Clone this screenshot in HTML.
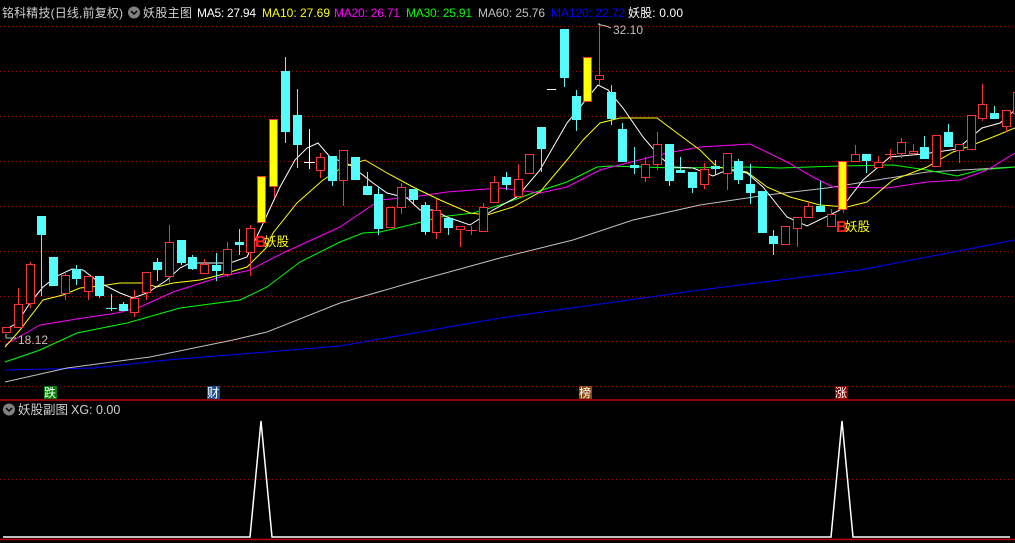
<!DOCTYPE html>
<html><head><meta charset="utf-8"><style>
html,body{margin:0;padding:0;background:#000;width:1015px;height:543px;overflow:hidden}
svg{display:block}
text{font-family:"Liberation Sans","Noto Sans CJK SC",sans-serif}
</style></head><body>
<svg width="1015" height="543" viewBox="0 0 1015 543" xmlns="http://www.w3.org/2000/svg">
<rect width="1015" height="543" fill="#000"/>
<g stroke="#a00000" stroke-width="1" stroke-dasharray="1,3">
<line x1="0" y1="26.5" x2="1015" y2="26.5"/><line x1="0" y1="71.5" x2="1015" y2="71.5"/>
<line x1="0" y1="116.5" x2="1015" y2="116.5"/><line x1="0" y1="161.5" x2="1015" y2="161.5"/>
<line x1="0" y1="206.5" x2="1015" y2="206.5"/><line x1="0" y1="251.5" x2="1015" y2="251.5"/>
<line x1="0" y1="296.5" x2="1015" y2="296.5"/><line x1="0" y1="341.5" x2="1015" y2="341.5"/>
<line x1="0" y1="386.5" x2="1015" y2="386.5"/><line x1="0" y1="479.5" x2="1015" y2="479.5"/>
</g>
<line x1="0" y1="400" x2="1015" y2="400" stroke="#c00000" stroke-width="1.5"/>
<line x1="0" y1="539.5" x2="1015" y2="539.5" stroke="#c00000" stroke-width="1.5"/>

<!-- header -->
<g font-size="12">
<text x="2" y="17" fill="#d0d0d0" textLength="121">铭科精技(日线,前复权)</text>
<circle cx="134" cy="12.5" r="6" fill="#808080"/><path d="M131 11 L134 14 L137 11" stroke="#000" stroke-width="1.5" fill="none"/>
<text x="143" y="17" fill="#d0d0d0" textLength="49">妖股主图</text>
<text x="197" y="17" fill="#fff" textLength="59">MA5: 27.94</text>
<text x="262" y="17" fill="#ffff00" textLength="68">MA10: 27.69</text>
<text x="334" y="17" fill="#ff00ff" textLength="66">MA20: 26.71</text>
<text x="406" y="17" fill="#00ff00" textLength="66">MA30: 25.91</text>
<text x="478" y="17" fill="#c0c0c0" textLength="67">MA60: 25.76</text>
<text x="551" y="17" fill="#0000ff" textLength="74">MA120: 22.72</text>
<text x="628" y="17" fill="#fff" textLength="55">妖股: 0.00</text>
</g>

<!-- MA lines -->
<g fill="none" stroke-width="1">
<polyline stroke="#0000ff" points="5,370 93,368 167,360 340,346 500,318 700,290 860,270 1015,240"/>
<polyline stroke="#c0c0c0" points="5,382 67,368 150,357 233,340 267,332 340,303 420,280 500,258 573,240 633,220 700,205 767,195 827,188 927,172 1015,167"/>
<polyline stroke="#00ff00" points="5,362 40,350 77,333 127,323 180,308 240,300 267,287 300,262 340,242 363,233 380,232 410,225 440,217 473,213 500,205 533,193 567,182 597,167 610,166 673,168 753,167 780,168 840,166 893,165 927,170 957,176 980,170 1015,167"/>
<polyline stroke="#ff00ff" points="5,345 40,325 83,318 117,313 140,307 173,292 220,277 250,270 283,253 340,227 380,200 413,197 447,192 500,188 540,193 567,187 600,170 627,163 667,153 700,147 750,144 787,162 813,177 833,187 887,188 927,182 960,180 987,170 1015,153"/>
<polyline stroke="#ffff00" points="5,347 20,330 43,300 63,295 80,288 100,286 120,283 143,283 157,287 173,283 200,280 220,275 247,267 267,247 273,233 297,203 323,180 343,167 365,160 387,173 413,187 440,200 470,213 487,215 513,207 540,192 567,160 583,140 600,123 620,118 657,118 677,133 700,150 717,167 747,172 767,187 790,197 820,205 847,207 867,202 893,180 927,167 953,152 967,147 993,137 1015,128"/>
<polyline stroke="#ffffff" points="5,330 17,323 30,303 43,287 57,276 72,269 83,270 100,283 120,293 133,298 147,293 167,280 180,268 190,263 230,263 247,257 260,230 280,187 295,160 307,148 318,143 330,157 350,165 373,183 387,193 407,198 420,210 433,210 447,217 470,225 493,210 517,197 540,170 567,123 598,85 608,90 623,108 643,137 660,157 673,167 693,168 713,176 727,170 747,173 763,187 787,217 807,226 840,210 863,180 890,157 923,154 957,149 982,128 1000,123 1015,110"/>
</g>

<!-- wicks -->
<g stroke-width="1">
<g stroke="#ff3232">
<line x1="18.5" y1="288" x2="18.5" y2="304"/><line x1="30.5" y1="262" x2="30.5" y2="308"/>
<line x1="65.5" y1="272" x2="65.5" y2="300"/><line x1="88.5" y1="291" x2="88.5" y2="300"/>
<line x1="134.5" y1="290" x2="134.5" y2="317"/><line x1="146.5" y1="292" x2="146.5" y2="300"/>
<line x1="169.5" y1="225" x2="169.5" y2="283"/><line x1="204.5" y1="259" x2="204.5" y2="264"/>
<line x1="227.5" y1="242" x2="227.5" y2="277"/><line x1="250.5" y1="225" x2="250.5" y2="276"/>
<line x1="274.5" y1="186" x2="274.5" y2="198"/>
<line x1="320.5" y1="153" x2="320.5" y2="178"/><line x1="343.5" y1="180" x2="343.5" y2="206"/>
<line x1="401.5" y1="183" x2="401.5" y2="214"/><line x1="436.5" y1="199" x2="436.5" y2="239"/>
<line x1="460.5" y1="229" x2="460.5" y2="247"/><line x1="471.5" y1="226" x2="471.5" y2="235"/><line x1="466" y1="230.5" x2="477" y2="230.5"/>
<line x1="483.5" y1="203" x2="483.5" y2="207"/><line x1="494.5" y1="176" x2="494.5" y2="182"/>
<line x1="518.5" y1="164" x2="518.5" y2="179"/><line x1="599.5" y1="23" x2="599.5" y2="85"/>
<line x1="645.5" y1="157" x2="645.5" y2="182"/><line x1="657.5" y1="132" x2="657.5" y2="170"/>
<line x1="704.5" y1="163" x2="704.5" y2="189"/><line x1="727.5" y1="173" x2="727.5" y2="190"/>
<line x1="797.5" y1="228" x2="797.5" y2="247"/><line x1="808.5" y1="202" x2="808.5" y2="206"/>
<line x1="831.5" y1="209" x2="831.5" y2="214"/><line x1="843.5" y1="209" x2="843.5" y2="213"/>
<line x1="855.5" y1="145" x2="855.5" y2="154"/><line x1="878.5" y1="156" x2="878.5" y2="162"/>
<line x1="890.5" y1="149" x2="890.5" y2="160"/><line x1="885" y1="154.5" x2="896" y2="154.5"/>
<line x1="901.5" y1="138" x2="901.5" y2="158"/><line x1="913.5" y1="144" x2="913.5" y2="156"/>
<line x1="959.5" y1="150" x2="959.5" y2="163"/><line x1="982.5" y1="84" x2="982.5" y2="121"/>
<line x1="1006.5" y1="126" x2="1006.5" y2="132"/>
</g>
<g stroke="#54fcfc">
<line x1="41.5" y1="235" x2="41.5" y2="296"/><line x1="76.5" y1="265" x2="76.5" y2="285"/>
<line x1="99.5" y1="296" x2="99.5" y2="298"/><line x1="111.5" y1="294" x2="111.5" y2="311"/><line x1="106" y1="308.5" x2="117" y2="308.5"/>
<line x1="123.5" y1="302" x2="123.5" y2="311"/><line x1="157.5" y1="258" x2="157.5" y2="281"/>
<line x1="181.5" y1="263" x2="181.5" y2="265"/><line x1="192.5" y1="255" x2="192.5" y2="270"/>
<line x1="216.5" y1="253" x2="216.5" y2="281"/><line x1="239.5" y1="229" x2="239.5" y2="255"/>
<line x1="285.5" y1="57" x2="285.5" y2="143"/><line x1="297.5" y1="89" x2="297.5" y2="168"/>
<line x1="332.5" y1="181" x2="332.5" y2="186"/><line x1="367.5" y1="172" x2="367.5" y2="195"/>
<line x1="378.5" y1="187" x2="378.5" y2="235"/><line x1="413.5" y1="200" x2="413.5" y2="205"/>
<line x1="425.5" y1="202" x2="425.5" y2="235"/><line x1="448.5" y1="228" x2="448.5" y2="235"/>
<line x1="506.5" y1="172" x2="506.5" y2="190"/><line x1="541.5" y1="149" x2="541.5" y2="172"/>
<line x1="564.5" y1="78" x2="564.5" y2="87"/><line x1="576.5" y1="90" x2="576.5" y2="131"/>
<line x1="611.5" y1="85" x2="611.5" y2="125"/><line x1="622.5" y1="123" x2="622.5" y2="129"/>
<line x1="634.5" y1="147" x2="634.5" y2="174"/><line x1="669.5" y1="181" x2="669.5" y2="186"/>
<line x1="680.5" y1="157" x2="680.5" y2="173"/><line x1="692.5" y1="188" x2="692.5" y2="193"/>
<line x1="715.5" y1="160" x2="715.5" y2="175"/><line x1="738.5" y1="159" x2="738.5" y2="184"/>
<line x1="750.5" y1="164" x2="750.5" y2="204"/><line x1="773.5" y1="230" x2="773.5" y2="255"/>
<line x1="820.5" y1="181" x2="820.5" y2="206"/><line x1="866.5" y1="161" x2="866.5" y2="173"/>
<line x1="924.5" y1="136" x2="924.5" y2="147"/><line x1="948.5" y1="124" x2="948.5" y2="132"/>
<line x1="994.5" y1="106" x2="994.5" y2="113"/>
</g>
<line x1="309.5" y1="129" x2="309.5" y2="169" stroke="#fff"/><line x1="304" y1="162.5" x2="315" y2="162.5" stroke="#fff"/>
<line x1="547" y1="89.5" x2="556" y2="89.5" stroke="#fff"/>
</g>

<!-- red hollow bodies -->
<g fill="#000" stroke="#ff3232" stroke-width="1">
<rect x="2.5" y="327.5" width="8" height="5"/>
<rect x="14.5" y="304.5" width="8" height="23"/><rect x="26.5" y="264.5" width="8" height="39"/>
<rect x="61.5" y="275.5" width="8" height="18"/><rect x="84.5" y="276.5" width="8" height="15"/>
<rect x="130.5" y="298.5" width="8" height="14"/><rect x="142.5" y="272.5" width="8" height="20"/>
<rect x="165.5" y="242.5" width="8" height="34"/><rect x="200.5" y="264.5" width="8" height="9"/>
<rect x="223.5" y="249.5" width="8" height="25"/><rect x="246.5" y="228.5" width="8" height="24"/>
<rect x="316.5" y="157.5" width="8" height="13"/><rect x="339.5" y="150.5" width="8" height="30"/>
<rect x="386.5" y="207.5" width="8" height="20"/><rect x="397.5" y="187.5" width="8" height="20"/>
<rect x="432.5" y="210.5" width="8" height="22"/><rect x="456.5" y="226.5" width="8" height="3"/>
<rect x="479.5" y="207.5" width="8" height="24"/><rect x="490.5" y="182.5" width="8" height="20"/>
<rect x="514.5" y="179.5" width="8" height="17"/><rect x="525.5" y="154.5" width="8" height="19"/>
<rect x="595.5" y="75.5" width="8" height="4"/>
<rect x="641.5" y="164.5" width="8" height="13"/><rect x="653.5" y="144.5" width="8" height="20"/>
<rect x="700.5" y="169.5" width="8" height="15"/><rect x="723.5" y="153.5" width="8" height="20"/>
<rect x="781.5" y="226.5" width="8" height="18"/><rect x="793.5" y="217.5" width="8" height="11"/>
<rect x="804.5" y="206.5" width="8" height="11"/><rect x="827.5" y="214.5" width="8" height="12"/>
<rect x="851.5" y="154.5" width="8" height="7"/><rect x="874.5" y="162.5" width="8" height="5"/>
<rect x="897.5" y="142.5" width="8" height="11"/><rect x="909.5" y="151.5" width="8" height="2"/>
<rect x="932.5" y="135.5" width="8" height="31"/><rect x="955.5" y="144.5" width="8" height="6"/>
<rect x="967.5" y="115.5" width="8" height="34"/><rect x="978.5" y="104.5" width="8" height="14"/>
<rect x="1002.5" y="110.5" width="8" height="16"/><rect x="1013.5" y="92.5" width="8" height="21"/>
</g>
<!-- cyan bodies -->
<g fill="#54fcfc">
<rect x="37" y="216" width="9" height="19"/><rect x="49" y="257" width="9" height="29"/>
<rect x="72" y="269" width="9" height="10"/><rect x="95" y="276" width="9" height="20"/>
<rect x="119" y="304" width="9" height="7"/><rect x="153" y="262" width="9" height="8"/>
<rect x="177" y="240" width="9" height="23"/><rect x="188" y="257" width="9" height="12"/>
<rect x="212" y="265" width="9" height="6"/><rect x="235" y="242" width="9" height="3"/>
<rect x="281" y="71" width="9" height="61"/><rect x="293" y="115" width="9" height="30"/>
<rect x="328" y="156" width="9" height="25"/><rect x="351" y="157" width="9" height="23"/>
<rect x="363" y="186" width="9" height="9"/><rect x="374" y="194" width="9" height="35"/>
<rect x="409" y="189" width="9" height="11"/><rect x="421" y="205" width="9" height="27"/>
<rect x="444" y="218" width="9" height="10"/><rect x="502" y="177" width="9" height="8"/>
<rect x="537" y="127" width="9" height="22"/><rect x="560" y="29" width="9" height="49"/>
<rect x="572" y="96" width="9" height="24"/><rect x="607" y="92" width="9" height="27"/>
<rect x="618" y="129" width="9" height="33"/><rect x="630" y="165" width="9" height="3"/>
<rect x="665" y="144" width="9" height="37"/><rect x="676" y="170" width="9" height="3"/>
<rect x="688" y="172" width="9" height="16"/><rect x="711" y="166" width="9" height="3"/>
<rect x="734" y="161" width="9" height="19"/><rect x="746" y="184" width="9" height="9"/>
<rect x="758" y="191" width="9" height="42"/><rect x="769" y="236" width="9" height="8"/>
<rect x="816" y="206" width="9" height="6"/><rect x="862" y="154" width="9" height="7"/>
<rect x="920" y="147" width="9" height="12"/><rect x="944" y="132" width="9" height="15"/>
<rect x="990" y="113" width="9" height="6"/>
</g>
<!-- yellow signal candles -->
<g fill="#ffff00" stroke="#ff3232" stroke-width="1">
<rect x="257.5" y="176.5" width="8" height="46"/>
<rect x="269.5" y="119.5" width="8" height="67"/>
<rect x="583.5" y="57.5" width="8" height="44"/>
<rect x="838.5" y="161.5" width="8" height="48"/>
</g>

<!-- labels -->
<text x="255" y="247" font-size="16" font-weight="bold" fill="#ff2020">B</text>
<text x="264" y="246" font-size="12.5" fill="#ffff00">妖股</text>
<text x="836" y="232" font-size="16" font-weight="bold" fill="#ff2020">B</text>
<text x="845" y="231" font-size="12.5" fill="#ffff00">妖股</text>
<path d="M598 24 L601 25 L606 26 L611 28" stroke="#c0c0c0" fill="none"/>
<text x="613" y="34" font-size="12" fill="#c0c0c0">32.10</text>
<path d="M6 334 L6 338 M6 338 L16 338" stroke="#c0c0c0" fill="none"/>
<text x="18" y="344" font-size="12" fill="#c0c0c0">18.12</text>

<rect x="44" y="386" width="13" height="13" fill="#008000"/><text x="44" y="397" font-size="12" fill="#fff">跌</text>
<rect x="207" y="386" width="13" height="13" fill="#1e4f8c"/><text x="207" y="397" font-size="12" fill="#fff">财</text>
<rect x="579" y="386" width="13" height="13" fill="#8c4a10"/><text x="579" y="397" font-size="12" fill="#fff">榜</text>
<rect x="835" y="386" width="13" height="13" fill="#8c0000"/><text x="835" y="397" font-size="12" fill="#fff">涨</text>

<!-- sub pane -->
<circle cx="9" cy="409.5" r="6" fill="#808080"/><path d="M6 408 L9 411 L12 408" stroke="#000" stroke-width="1.5" fill="none"/>
<text x="18" y="414" font-size="12.5" fill="#d0d0d0">妖股副图</text>
<text x="71" y="414" font-size="12.5" fill="#d0d0d0">XG: 0.00</text>
<polyline fill="none" stroke="#fff" stroke-width="1.5" points="3,537 250,537 261,421 272,537 831,537 842,421 853,537 1010,537"/>
</svg>
</body></html>
